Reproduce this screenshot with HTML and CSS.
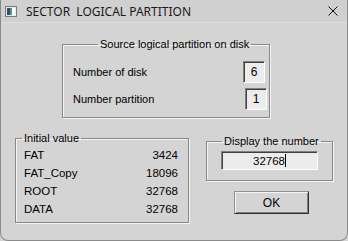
FILE: index.html
```html
<!DOCTYPE html>
<html lang="en">
<head>
  <meta charset="UTF-8">
  <meta name="viewport" content="width=device-width, initial-scale=1.0">
  <title>Sector Logical Partition</title>
  <link rel="stylesheet" href="styles.css">
</head>
<body>

  <div class="window">
    <div class="titlebar">
      <svg class="app-icon" width="12" height="11" viewBox="0 0 12 11">
        <rect x="0.5" y="0.5" width="11" height="10" fill="#e8e8e8" stroke="#7a7a7a"/>
        <rect x="2" y="2" width="3" height="7" fill="#2a4f7a"/>
        <rect x="5" y="2" width="2" height="7" fill="#4f9a6a"/>
        <rect x="7" y="2" width="3" height="7" fill="#ffffff"/>
      </svg>
      <span class="title">SECTOR  LOGICAL PARTITION</span>
      <svg class="close" width="10" height="10" viewBox="0 0 10 10">
        <path d="M0.5 0.5 L9.5 9.5 M9.5 0.5 L0.5 9.5" stroke="#111" stroke-width="1"/>
      </svg>
    </div>

    <div class="client">
      <fieldset class="group group-source">
        <legend>Source logical partition on disk</legend>
        <div class="field-row">
          <span>Number of disk</span>
          <span class="num-box">6</span>
        </div>
        <div class="field-row shift">
          <span>Number partition</span>
          <span class="num-box">1</span>
        </div>
      </fieldset>

      <div class="lower">
        <fieldset class="group group-initial">
          <legend>Initial value</legend>
          <div class="value-row"><span>FAT</span><span>3424</span></div>
          <div class="value-row"><span>FAT_Copy</span><span>18096</span></div>
          <div class="value-row"><span>ROOT</span><span>32768</span></div>
          <div class="value-row"><span>DATA</span><span>32768</span></div>
        </fieldset>

        <div class="right-col">
          <fieldset class="group group-display">
            <legend>Display the number</legend>
            <div class="display-box">32768<span class="caret"></span></div>
          </fieldset>
          <button class="ok-btn">OK</button>
        </div>
      </div>
    </div>
  </div>

</body>
</html>
```

FILE: styles.css
```css
body {
  margin: 0;
  background: #d4d4d4;
  font-family: "Liberation Sans", Arial, sans-serif;
  font-size: 11px;
  color: #000;
}

.window {
  box-sizing: border-box;
  width: 348px;
  height: 241px;
  background: #d4d4d4;
  border: 1px solid #8a8a8a;
  border-top: none;
  border-radius: 0 0 8px 8px;
  overflow: hidden;
}

.titlebar {
  height: 22px;
  display: flex;
  align-items: center;
  padding: 0 9px 0 4px;
  border-bottom: 1px solid #dedede;
  background: #d0d0d0;
}

.app-icon {
  margin-right: 9px;
}

.title {
  flex: 1;
  white-space: pre;
  font-family: "Noto Sans", sans-serif;
  font-size: 12px;
  color: #1a1a1a;
}

.client {
  display: flex;
  flex-direction: column;
}

.group {
  margin: 0;
  min-width: 0;
  border: 1px solid #888;
  box-shadow: inset 1px 1px #f4f4f4, 1px 1px #f4f4f4;
}

.group legend {
  padding: 0 2px;
  line-height: 14px;
  white-space: nowrap;
}

.group-source {
  margin: 14px 0 0 61px;
  width: 208px;
  box-sizing: border-box;
  padding: 10px 4px 7px 10px;
  display: flex;
  flex-direction: column;
  gap: 5px;
}

.group-source legend {
  margin-left: 25px;
}

.field-row {
  display: flex;
  align-items: center;
  justify-content: space-between;
  height: 22px;
}

.field-row.shift {
  margin-right: -2px;
}

.num-box,
.display-box {
  box-sizing: border-box;
  background: #ececec;
  border: 1px solid;
  border-color: #808080 #ffffff #ffffff #808080;
  box-shadow: inset 1px 1px #404040;
  display: flex;
  align-items: center;
  justify-content: center;
}

.num-box {
  width: 22px;
  height: 22px;
  font-size: 12px;
}

.lower {
  display: flex;
  align-items: flex-start;
  margin: 13px 0 0 14px;
  gap: 17px;
}

.group-initial {
  width: 174px;
  box-sizing: border-box;
  padding: 1px 10px 4px 8px;
}

.group-initial legend {
  margin-left: -2px;
}

.value-row {
  display: flex;
  justify-content: space-between;
  line-height: 18px;
  font-size: 11.5px;
}

.right-col {
  display: flex;
  flex-direction: column;
  margin-top: 3px;
}

.group-display {
  width: 127px;
  box-sizing: border-box;
  padding: 3px 14px 10px 14px;
}

.group-display legend {
  margin-left: 1px;
}

.display-box {
  width: 97px;
  height: 19px;
  font-size: 11.5px;
}

.caret {
  display: inline-block;
  width: 1px;
  height: 13px;
  background: #000;
}

.ok-btn {
  margin: 10px 0 0 28px;
  width: 75px;
  height: 23px;
  padding: 0;
  background: #d4d4d4;
  border: 1px solid;
  border-color: #909090 #303030 #303030 #909090;
  box-shadow: inset 1px 1px #f4f4f4, inset -1px -1px #808080;
  font-family: "Liberation Sans", Arial, sans-serif;
  font-size: 12px;
  color: #000;
}
```
